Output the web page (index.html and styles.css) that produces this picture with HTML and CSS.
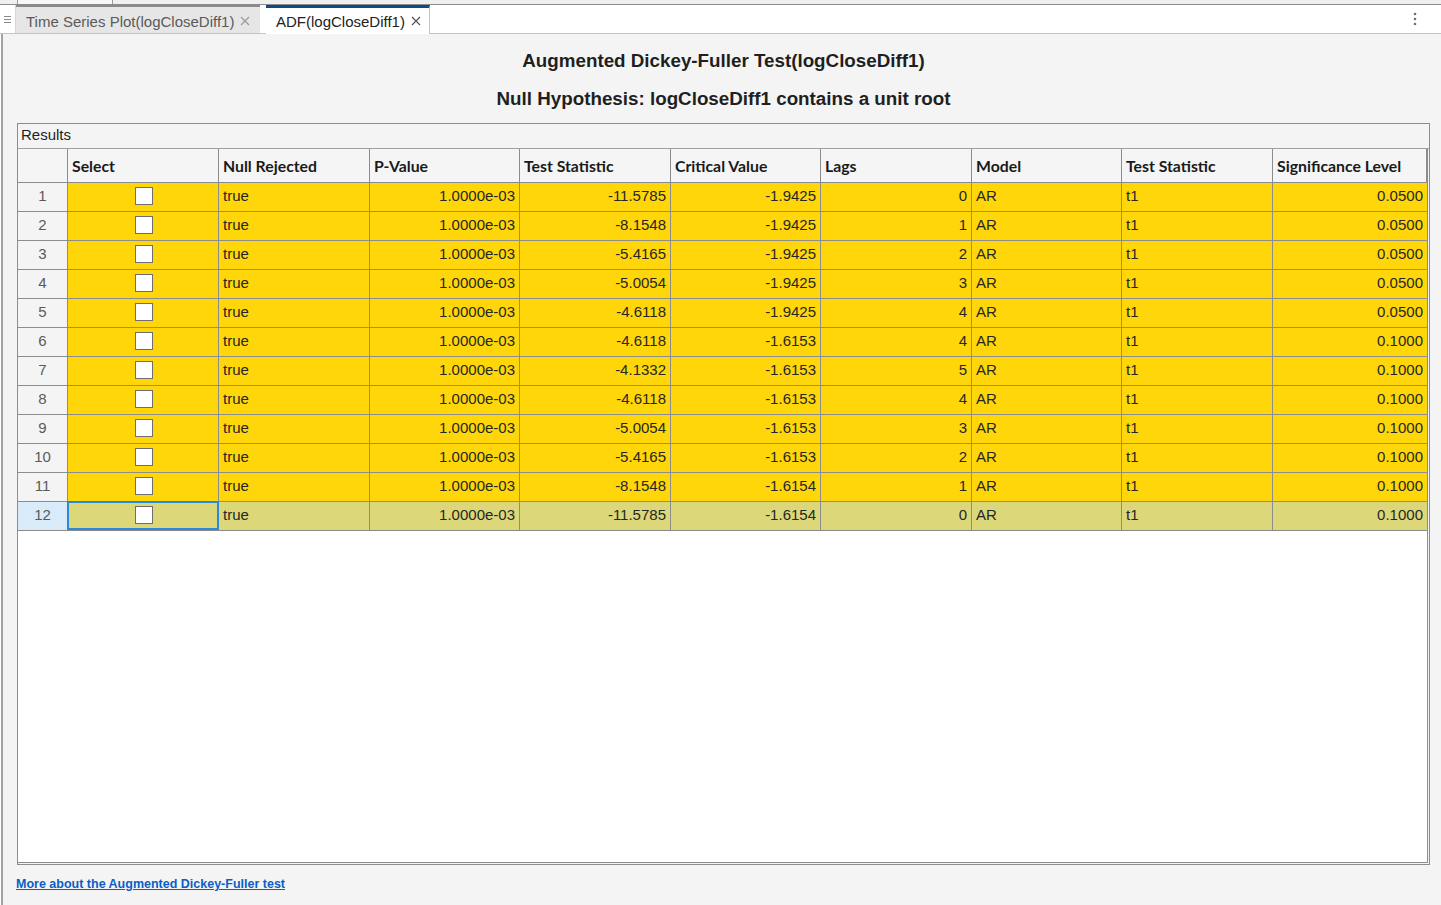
FILE: index.html
```html
<!DOCTYPE html>
<html lang="en">
<head>
<meta charset="utf-8">
<title>ADF(logCloseDiff1)</title>
<link rel="stylesheet" href="styles.css">
</head>
<body>
<div class="topstrip"><div class="ghost-tab"></div></div>
<div class="tabbar">
  <div class="grip">
    <svg width="7" height="9" viewBox="0 0 7 9"><path d="M0 1.5h7M0 4.5h7M0 7.5h7" stroke="#8a8a8a" stroke-width="1"/></svg>
  </div>
  <div class="tab tab-inactive">
    <span class="tab-label">Time Series Plot(logCloseDiff1)</span>
    <svg class="tab-close" width="10" height="10" viewBox="0 0 10 10"><path d="M1 1L9 9M9 1L1 9" stroke="#9a9a9a" stroke-width="1.2"/></svg>
  </div>
  <div class="tab tab-active">
    <span class="tab-label">ADF(logCloseDiff1)</span>
    <svg class="tab-close" width="10" height="10" viewBox="0 0 10 10"><path d="M1 1L9 9M9 1L1 9" stroke="#555" stroke-width="1.2"/></svg>
  </div>
  <div class="tab-fill"></div>
  <div class="kebab">
    <svg width="4" height="14" viewBox="0 0 4 14"><circle cx="2" cy="2" r="1.3" fill="#707070"/><circle cx="2" cy="7" r="1.3" fill="#707070"/><circle cx="2" cy="12" r="1.3" fill="#707070"/></svg>
  </div>
</div>

<main class="content">
  <h1 class="title">Augmented Dickey-Fuller Test(logCloseDiff1)</h1>
  <h2 class="subtitle">Null Hypothesis: logCloseDiff1 contains a unit root</h2>

  <section class="panel">
    <div class="panel-title">Results</div>
    <div class="table-wrap">
      <div class="grid" id="grid">
        <div class="hc rh"></div>
        <div class="hc">Select</div>
        <div class="hc">Null Rejected</div>
        <div class="hc">P-Value</div>
        <div class="hc">Test Statistic</div>
        <div class="hc">Critical Value</div>
        <div class="hc">Lags</div>
        <div class="hc">Model</div>
        <div class="hc">Test Statistic</div>
        <div class="hc">Significance Level</div>

        <div class="c rh">1</div><div class="c cb"><span class="box"></span></div><div class="c">true</div><div class="c r">1.0000e-03</div><div class="c r">-11.5785</div><div class="c r">-1.9425</div><div class="c r">0</div><div class="c">AR</div><div class="c">t1</div><div class="c r">0.0500</div>
        <div class="c rh">2</div><div class="c cb"><span class="box"></span></div><div class="c">true</div><div class="c r">1.0000e-03</div><div class="c r">-8.1548</div><div class="c r">-1.9425</div><div class="c r">1</div><div class="c">AR</div><div class="c">t1</div><div class="c r">0.0500</div>
        <div class="c rh">3</div><div class="c cb"><span class="box"></span></div><div class="c">true</div><div class="c r">1.0000e-03</div><div class="c r">-5.4165</div><div class="c r">-1.9425</div><div class="c r">2</div><div class="c">AR</div><div class="c">t1</div><div class="c r">0.0500</div>
        <div class="c rh">4</div><div class="c cb"><span class="box"></span></div><div class="c">true</div><div class="c r">1.0000e-03</div><div class="c r">-5.0054</div><div class="c r">-1.9425</div><div class="c r">3</div><div class="c">AR</div><div class="c">t1</div><div class="c r">0.0500</div>
        <div class="c rh">5</div><div class="c cb"><span class="box"></span></div><div class="c">true</div><div class="c r">1.0000e-03</div><div class="c r">-4.6118</div><div class="c r">-1.9425</div><div class="c r">4</div><div class="c">AR</div><div class="c">t1</div><div class="c r">0.0500</div>
        <div class="c rh">6</div><div class="c cb"><span class="box"></span></div><div class="c">true</div><div class="c r">1.0000e-03</div><div class="c r">-4.6118</div><div class="c r">-1.6153</div><div class="c r">4</div><div class="c">AR</div><div class="c">t1</div><div class="c r">0.1000</div>
        <div class="c rh">7</div><div class="c cb"><span class="box"></span></div><div class="c">true</div><div class="c r">1.0000e-03</div><div class="c r">-4.1332</div><div class="c r">-1.6153</div><div class="c r">5</div><div class="c">AR</div><div class="c">t1</div><div class="c r">0.1000</div>
        <div class="c rh">8</div><div class="c cb"><span class="box"></span></div><div class="c">true</div><div class="c r">1.0000e-03</div><div class="c r">-4.6118</div><div class="c r">-1.6153</div><div class="c r">4</div><div class="c">AR</div><div class="c">t1</div><div class="c r">0.1000</div>
        <div class="c rh">9</div><div class="c cb"><span class="box"></span></div><div class="c">true</div><div class="c r">1.0000e-03</div><div class="c r">-5.0054</div><div class="c r">-1.6153</div><div class="c r">3</div><div class="c">AR</div><div class="c">t1</div><div class="c r">0.1000</div>
        <div class="c rh">10</div><div class="c cb"><span class="box"></span></div><div class="c">true</div><div class="c r">1.0000e-03</div><div class="c r">-5.4165</div><div class="c r">-1.6153</div><div class="c r">2</div><div class="c">AR</div><div class="c">t1</div><div class="c r">0.1000</div>
        <div class="c rh">11</div><div class="c cb"><span class="box"></span></div><div class="c">true</div><div class="c r">1.0000e-03</div><div class="c r">-8.1548</div><div class="c r">-1.6154</div><div class="c r">1</div><div class="c">AR</div><div class="c">t1</div><div class="c r">0.1000</div>
        <div class="c rh sel">12</div><div class="c cb sel focus"><span class="box"></span></div><div class="c sel">true</div><div class="c r sel">1.0000e-03</div><div class="c r sel">-11.5785</div><div class="c r sel">-1.6154</div><div class="c r sel">0</div><div class="c sel">AR</div><div class="c sel">t1</div><div class="c r sel">0.1000</div>
      </div>
    </div>
  </section>

  <a class="more-link" href="#">More about the Augmented Dickey-Fuller test</a>
</main>
</body>
</html>
```

FILE: styles.css
```css
* { box-sizing: border-box; }
html, body { margin: 0; padding: 0; }
body {
  width: 1441px;
  height: 905px;
  overflow: hidden;
  background: #ffffff;
  font-family: "Liberation Sans", Arial, sans-serif;
  color: #1f1f1f;
}

/* very top strip (cut-off tab row above) */
.topstrip {
  height: 5px;
  background: #f0f0f0;
  border-bottom: 1px solid #8c8c8c;
  display: flex;
}
.ghost-tab {
  margin-left: 17px;
  width: 96px;
  height: 4px;
  background: #f7f7f7;
  border-left: 1px solid #9a9a9a;
  border-right: 1px solid #9a9a9a;
}

/* tab bar */
.tabbar {
  height: 29px;
  display: flex;
  background: #ffffff;
  border-bottom: 1px solid #c4c4c4;
}
.grip {
  width: 16px;
  height: 28px;
  display: flex;
  align-items: center;
  justify-content: center;
  border-right: 1px solid #d6d6d6;
  padding-right: 1px;
}
.tab {
  display: flex;
  align-items: center;
  height: 28px;
  font-size: 15px;
}
.tab-inactive {
  width: 244px;
  background: #e6e6e6;
  border-top: 2px solid #8a8a8a;
  padding-left: 10px;
  padding-top: 2px;
  color: #5a5a5a;
}
.tab-active {
  margin-left: 6px;
  width: 164px;
  background: #ffffff;
  border-top: 3px solid #0d4a8c;
  border-right: 1px solid #c4c4c4;
  padding-left: 10px;
  color: #222;
  height: 29px;
  margin-bottom: -1px;
}
.tab-close { margin-left: 6px; }
.tab-fill { flex: 1; }
.kebab {
  width: 30px;
  display: flex;
  align-items: center;
  justify-content: center;
  margin-right: 11px;
}

/* content */
.content {
  height: 871px;
  margin-left: 1px;
  border-left: 2px solid #a2a2a2;
  background: #f4f4f4;
  padding: 16px 11px 0 14px;
}
.title, .subtitle {
  margin: 0;
  text-align: center;
  font-size: 18.8px;
  line-height: 22px;
  font-weight: 700;
  color: #1f1f1f;
}
.subtitle { margin-top: 16px; }

.panel {
  margin-top: 13px;
  height: 742px;
  border: 1px solid #8c8c8c;
  background: #f4f4f4;
  display: flex;
  flex-direction: column;
}
.panel-title {
  height: 25px;
  border-bottom: 1px solid #a0a0a0;
  font-size: 15px;
  line-height: 22px;
  padding-left: 3px;
  color: #1f1f1f;
}
.table-wrap {
  height: 714px;
  margin-right: 1px;
  border-right: 1px solid #8c8c8c;
  border-bottom: 1px solid #8c8c8c;
  background: #ffffff;
}
.grid {
  display: grid;
  grid-template-columns: 50px 151px 151px 150px 151px 150px 151px 150px 151px 1fr;
  grid-auto-rows: 29px;
  grid-template-rows: 34px;
}
.hc {
  background: #f5f5f5;
  border-right: 1px solid #8c8c8c;
  border-bottom: 1px solid #8c8c8c;
  font-family: Lato, "Open Sans", sans-serif;
  font-weight: 700;
  font-size: 15.8px;
  color: #1a1a1a;
  display: flex;
  align-items: center;
  padding-left: 4px;
  padding-bottom: 1px;
}
.hc:last-child { border-right: none; }
.c {
  background: #ffd60a;
  border-right: 1px solid #8c8c8c;
  border-bottom: 1px solid #8c8c8c;
  font-size: 15px;
  color: #262626;
  display: flex;
  align-items: center;
  padding: 0 4px 3px;
  white-space: nowrap;
}
.c:nth-child(10n) { border-right: none; }
.c.r { justify-content: flex-end; }
.c.rh {
  background: #f4f4f4;
  justify-content: center;
  color: #5a5a5a;
}
.c.cb { justify-content: center; padding-bottom: 2px; }
.c.sel { background: #dcd87a; }
.c.rh.sel { background: #d9eaf8; }
.c.focus { position: relative; }
.c.focus::after {
  content: "";
  position: absolute;
  left: -1px;
  top: -1px;
  right: -1px;
  bottom: 0;
  border: 2px solid #2b8ad8;
}
.box {
  width: 18px;
  height: 18px;
  background: #ffffff;
  border: 1px solid #6e6e6e;
  margin-left: 1px;
}

.more-link {
  display: inline-block;
  margin-top: 11px;
  margin-left: -1px;
  font-size: 12.5px;
  font-weight: 700;
  color: #0a5ec4;
  text-decoration: underline;
  line-height: 16px;
}
```
